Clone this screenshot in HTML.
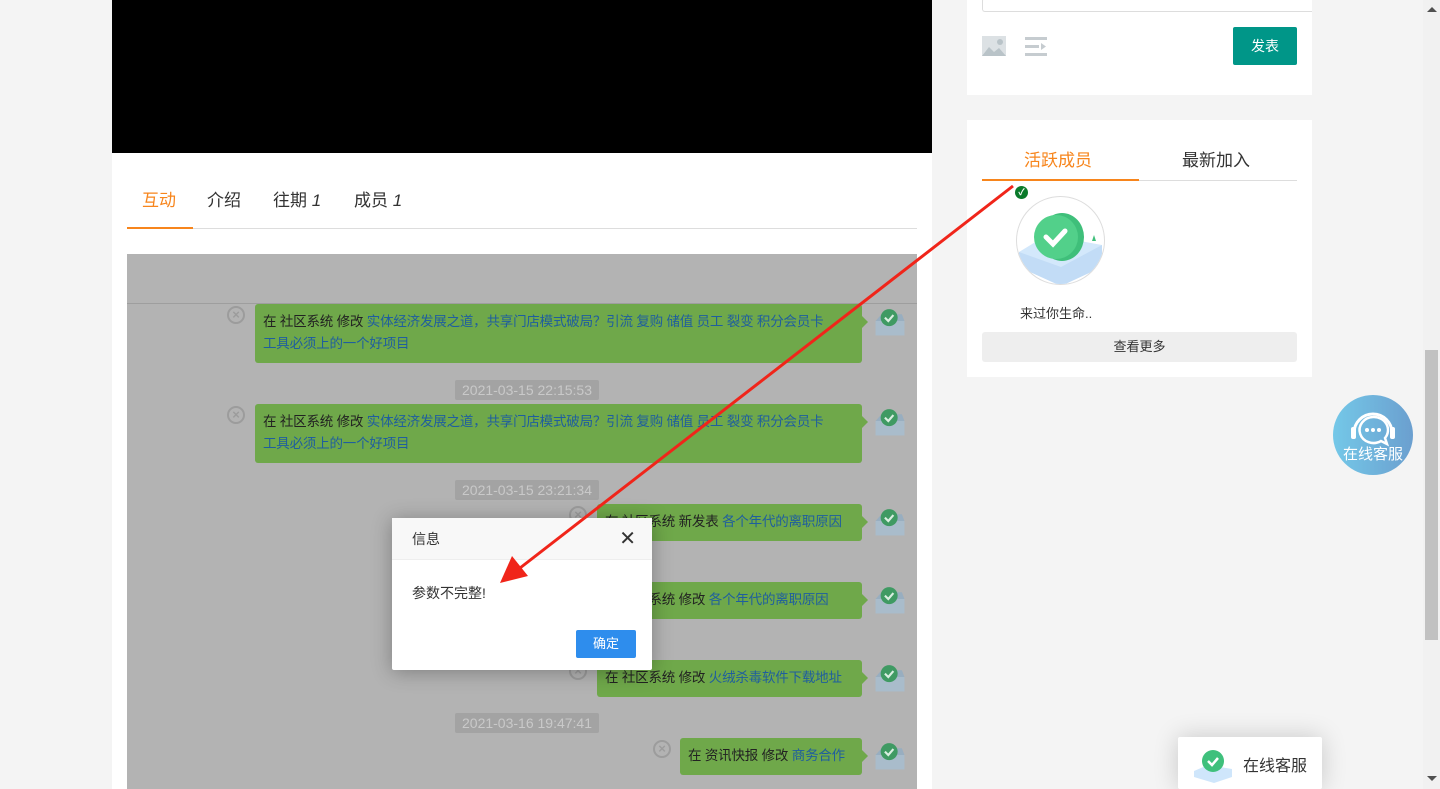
<!DOCTYPE html>
<html><head><meta charset="utf-8">
<style>
*{margin:0;padding:0;box-sizing:border-box}
html,body{width:1440px;height:789px;overflow:hidden}
body{background:#f4f4f4;font-family:"Liberation Sans","Noto Sans CJK SC",sans-serif;position:relative;color:#333}
.abs{position:absolute}
.main{left:112px;top:0;width:820px;height:789px;background:#fff}
.video{left:112px;top:0;width:820px;height:153px;background:#000}
.tab{top:186px;font-size:17px;color:#333}
.chat{left:127px;top:254px;width:790px;height:535px;background:#b3b3b3;overflow:hidden}
.bub{position:absolute;right:55px;background:#6fa84a;border-radius:3px;font-size:13.5px;line-height:22px;padding:7px 8px;color:#222;white-space:nowrap;letter-spacing:-0.2px}
.bub a{color:#1f5e9e;text-decoration:none}
.bub:after{content:"";position:absolute;right:-6px;top:12px;border-left:6px solid #6fa84a;border-top:6px solid transparent;border-bottom:6px solid transparent}
.ts{position:absolute;left:328px;width:144px;height:20px;background:#a3a3a3;color:#c9c9c9;font-size:14px;line-height:20px;text-align:center;border-radius:2px}
.x{position:absolute;width:18px;height:18px;border:2px solid #9c9c9c;border-radius:50%;color:#9c9c9c;font-size:13px;line-height:13px;text-align:center;font-weight:bold}
.av{position:absolute;right:10px;width:34px;height:34px}
.panel{background:#fff}
</style></head><body>
<div class="abs main"></div>
<div class="abs video"></div>
<div class="abs tab" style="left:142px;color:#f7851c">互动</div>
<div class="abs tab" style="left:207px">介绍</div>
<div class="abs tab" style="left:273px">往期 <i>1</i></div>
<div class="abs tab" style="left:354px">成员 <i>1</i></div>
<div class="abs" style="left:127px;top:228px;width:790px;height:1px;background:#ddd"></div>
<div class="abs" style="left:127px;top:227px;width:66px;height:2px;background:#f7851c"></div>

<svg width="0" height="0" style="position:absolute"><defs>
<symbol id="av" viewBox="0 0 40 40"><rect x="3" y="20" width="34" height="17" fill="#a9bccb"/><path d="M3 20 L10 12 L34 12 L37 20Z" fill="#98aec0"/><circle cx="19" cy="16" r="10" fill="#3f9a63"/><path d="M14 16 l4 4 l6-7" stroke="#d8eee0" stroke-width="2.5" fill="none"/></symbol>
</defs></svg>

<div class="chat abs">
  <div style="position:absolute;left:0;top:49px;width:790px;height:1px;background:#9e9e9e"></div>
  <div class="x" style="left:100px;top:52px">×</div>
  <div class="bub" style="left:128px;top:50px;height:59px">在 社区系统 修改 <a>实体经济发展之道，共享门店模式破局？引流 复购 储值 员工 裂变 积分会员卡<br>工具必须上的一个好项目</a></div>
  <svg class="av" style="top:50px"><use href="#av"/></svg>
  <div class="ts" style="top:126px">2021-03-15 22:15:53</div>
  <div class="x" style="left:100px;top:152px">×</div>
  <div class="bub" style="left:128px;top:150px;height:59px">在 社区系统 修改 <a>实体经济发展之道，共享门店模式破局？引流 复购 储值 员工 裂变 积分会员卡<br>工具必须上的一个好项目</a></div>
  <svg class="av" style="top:150px"><use href="#av"/></svg>
  <div class="ts" style="top:226px">2021-03-15 23:21:34</div>
  <div class="x" style="left:442px;top:252px">×</div>
  <div class="bub" style="left:470px;top:250px;height:37px">在 社区系统 新发表 <a>各个年代的离职原因</a></div>
  <svg class="av" style="top:250px"><use href="#av"/></svg>
  <div class="ts" style="top:304px">2021-03-15 23:30:12</div>
  <div class="x" style="left:442px;top:330px">×</div>
  <div class="bub" style="left:470px;top:328px;height:37px">在 社区系统 修改 <a>各个年代的离职原因</a></div>
  <svg class="av" style="top:328px"><use href="#av"/></svg>
  <div class="x" style="left:442px;top:408px">×</div>
  <div class="bub" style="left:470px;top:406px;height:37px">在 社区系统 修改 <a>火绒杀毒软件下载地址</a></div>
  <svg class="av" style="top:406px"><use href="#av"/></svg>
  <div class="ts" style="top:459px">2021-03-16 19:47:41</div>
  <div class="x" style="left:526px;top:486px">×</div>
  <div class="bub" style="left:553px;top:484px;height:37px">在 资讯快报 修改 <a>商务合作</a></div>
  <svg class="av" style="top:484px"><use href="#av"/></svg>
</div>

<div class="abs" style="left:392px;top:518px;width:260px;height:152px;background:#fff;box-shadow:0 2px 20px rgba(0,0,0,.3);border-radius:2px">
  <div style="height:42px;background:#f8f8f8;border-bottom:1px solid #eee;font-size:14px;line-height:42px;padding-left:20px;color:#333">信息</div>
  <div style="position:absolute;right:16px;top:10px;font-size:20px;color:#333;line-height:22px">✕</div>
  <div style="position:absolute;left:20px;top:65px;font-size:14px;color:#333">参数不完整!</div>
  <div style="position:absolute;left:184px;top:112px;width:60px;height:28px;background:#2e8ded;color:#fff;font-size:13px;line-height:28px;text-align:center;border-radius:2px">确定</div>
</div>

<div class="abs panel" style="left:967px;top:0;width:345px;height:95px"></div>
<div class="abs" style="left:982px;top:-2px;width:330px;height:14px;border:1px solid #ddd;border-right:none;border-radius:3px 0 0 3px;background:#fff"></div>
<svg class="abs" style="left:982px;top:36px" width="25" height="21"><rect x="0" y="0" width="24" height="20" fill="#dce1e4"/><path d="M0 20 L7 11 L12 16 L17 12 L24 20Z" fill="#b9c3c8"/><circle cx="18" cy="6" r="3" fill="#b9c3c8"/></svg>
<svg class="abs" style="left:1025px;top:36px" width="24" height="21"><rect x="0" y="1" width="22" height="3" fill="#c6ccd0"/><rect x="0" y="9" width="14" height="3" fill="#c6ccd0"/><path d="M16 7 L21 10.5 L16 14Z" fill="#c6ccd0"/><rect x="0" y="17" width="22" height="3" fill="#c6ccd0"/></svg>
<div class="abs" style="left:1233px;top:27px;width:64px;height:38px;background:#009688;color:#fff;font-size:14px;line-height:38px;text-align:center;border-radius:2px">发表</div>

<div class="abs panel" style="left:967px;top:120px;width:345px;height:257px"></div>
<div class="abs" style="left:1024px;top:146px;font-size:17px;color:#f7851c">活跃成员</div>
<div class="abs" style="left:1182px;top:146px;font-size:17px;color:#333">最新加入</div>
<div class="abs" style="left:982px;top:180px;width:315px;height:1px;background:#ddd"></div>
<div class="abs" style="left:982px;top:179px;width:157px;height:2px;background:#f7851c"></div>
<div class="abs" style="left:1016px;top:196px;width:89px;height:89px;border-radius:50%;border:1px solid #ddd;overflow:hidden;background:#fff">
 <svg width="89" height="89" viewBox="0 0 89 89"><path d="M2 55 L30 38 L85 48 L85 70 L44 89 L2 70Z" fill="#d3e8fb"/><path d="M2 55 L44 70 L85 48 L85 70 L44 89 L2 70Z" fill="#c2dcf6"/><ellipse cx="45" cy="40" rx="22" ry="24" fill="#3fbf7a"/><circle cx="39" cy="40" r="22" fill="#52d08a"/><path d="M29 40 l7 7 l12-13" stroke="#fff" stroke-width="5" fill="none" stroke-linecap="round"/><path d="M75 44 l2 -6 l2 6z" fill="#3fbf7a"/></svg>
</div>
<div class="abs" style="left:1015px;top:186px;width:13px;height:13px;border-radius:50%;background:#0a7a2a;color:#fff;font-size:9px;line-height:13px;text-align:center;font-weight:bold">✓</div>
<div class="abs" style="left:1020px;top:303px;font-size:13px;color:#333">来过你生命..</div>
<div class="abs" style="left:982px;top:332px;width:315px;height:30px;background:#eee;border-radius:3px;font-size:13px;line-height:30px;text-align:center;color:#333">查看更多</div>

<div class="abs" style="left:1333px;top:395px;width:80px;height:80px;border-radius:50%;background:linear-gradient(90deg,#74c8e8,#6b9fcf)">
 <svg width="80" height="80" style="position:absolute;left:0;top:0"><path d="M21 38 a19 19 0 0 1 38 0" stroke="#fff" stroke-width="3" fill="none"/><rect x="18" y="32" width="5" height="12" rx="2" fill="#fff"/><rect x="57" y="32" width="5" height="12" rx="2" fill="#fff"/><path d="M40 22 a14 13 0 1 0 8 24 l6 3 l-2 -6 a14 13 0 0 0 -12 -21z" stroke="#fff" stroke-width="2.5" fill="none"/><circle cx="34" cy="35" r="2" fill="#fff"/><circle cx="40" cy="35" r="2" fill="#fff"/><circle cx="46" cy="35" r="2" fill="#fff"/></svg>
 <div style="position:absolute;left:0;top:48px;width:80px;text-align:center;color:#fff;font-size:15px">在线客服</div>
</div>

<div class="abs" style="left:1178px;top:737px;width:144px;height:52px;background:#fff;box-shadow:0 0 25px rgba(0,0,0,.18);border-radius:2px">
 <svg width="40" height="36" style="position:absolute;left:16px;top:10px" viewBox="0 0 40 36"><path d="M0 24 L14 18 L38 22 L38 30 L20 36 L0 30Z" fill="#cfe6fb"/><circle cx="19" cy="14" r="11" fill="#3fc07c"/><path d="M14 14 l4 4 l6-7" stroke="#fff" stroke-width="2.5" fill="none"/></svg>
 <div style="position:absolute;left:65px;top:15px;font-size:16px;color:#333">在线客服</div>
</div>

<div class="abs" style="left:1423px;top:0;width:17px;height:789px;background:#f1f1f1"></div>
<div class="abs" style="left:1425px;top:350px;width:13px;height:290px;background:#c1c1c1"></div>
<div class="abs" style="left:1427px;top:7px;border-left:5px solid transparent;border-right:5px solid transparent;border-bottom:5px solid #505050"></div>
<div class="abs" style="left:1427px;top:776px;border-left:5px solid transparent;border-right:5px solid transparent;border-top:5px solid #505050"></div>

<svg class="abs" style="left:0;top:0" width="1440" height="789"><line x1="1013" y1="186" x2="520" y2="568" stroke="#f0251a" stroke-width="3"/><path d="M500 583 L512 556 L528 576Z" fill="#f0251a"/></svg>
</body></html>
